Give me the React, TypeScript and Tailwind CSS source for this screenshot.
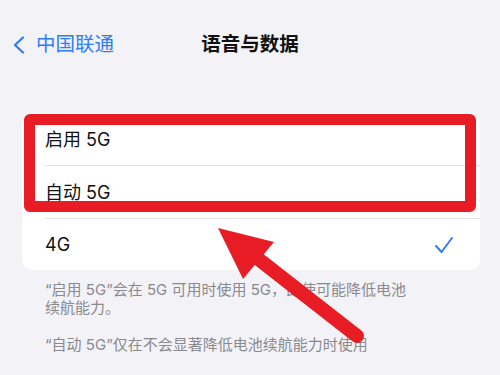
import React from "react";

const ROWS = [
  { label: "启用 5G", h: "h-[52px]", checked: false },
  { label: "自动 5G", h: "h-[52px]", checked: false },
  { label: "4G", h: "h-[51px]", checked: true },
];

function Check() {
  return (
    <svg width="20" height="18" viewBox="0 0 20 18" fill="none">
      <path
        d="M2 10 L7.5 16 L18 2"
        stroke="#2f7cf6"
        strokeWidth="2"
        strokeLinecap="round"
        strokeLinejoin="round"
      />
    </svg>
  );
}

export default function App() {
  return (
    <div
      className="relative w-[500px] h-[375px] overflow-hidden bg-[#f2f2f7]"
      style={{ fontFamily: 'Inter, "Noto Sans CJK SC", sans-serif' }}
    >
      {/* status bar (cut off) */}
      <div className="h-[20px]" />

      {/* nav bar */}
      <div className="relative h-[50px] flex items-center">
        <div className="flex items-center pl-[12px] gap-[10px] text-[#2f7cf6]">
          <svg width="14" height="18" viewBox="0 0 14 18" fill="none">
            <path
              d="M11 1.5 L3 9 L11 16.5"
              stroke="#2f7cf6"
              strokeWidth="2.2"
              strokeLinecap="round"
              strokeLinejoin="round"
            />
          </svg>
          <span className="text-[19.5px] leading-none">中国联通</span>
        </div>
        <div className="absolute inset-0 flex items-center justify-center pointer-events-none">
          <span className="text-[19.5px] font-bold leading-none text-[#111]">语音与数据</span>
        </div>
      </div>

      {/* options card */}
      <div className="mt-[43px] ml-[22px] mr-[20px] bg-white rounded-[10px] overflow-hidden">
        {ROWS.map((row, i) => (
          <div key={row.label}>
            {i > 0 && <div className="ml-[23px] h-px bg-[#e3e3e6]" />}
            <div className={`${row.h} flex items-center justify-between pl-[23px] pr-[26px]`}>
              <span className="text-[18px] text-[#111]">{row.label}</span>
              {row.checked && <Check />}
            </div>
          </div>
        ))}
      </div>

      {/* footer notes */}
      <div className="pl-[45px] pt-[11px] text-[15px] leading-[18px] text-[#8a8a8e]">
        <p>
          “启用 5G”会在 5G 可用时使用 5G，即使可能降低电池
          <br />
          续航能力。
        </p>
        <p className="mt-[19px]">“自动 5G”仅在不会显著降低电池续航能力时使用</p>
      </div>

      {/* annotation box */}
      <div className="absolute left-[24px] top-[114px] w-[452px] h-[98px] border-[11px] border-[#e81c24] rounded-[6px]" />

      {/* annotation arrow */}
      <svg
        className="absolute inset-0 pointer-events-none"
        width="500"
        height="375"
        viewBox="0 0 500 375"
      >
        <line
          x1="252"
          y1="254"
          x2="357"
          y2="336"
          stroke="#e81c24"
          strokeWidth="14"
          strokeLinecap="round"
        />
        <polygon points="218,228 274,242 243,279" fill="#e81c24" />
      </svg>
    </div>
  );
}
